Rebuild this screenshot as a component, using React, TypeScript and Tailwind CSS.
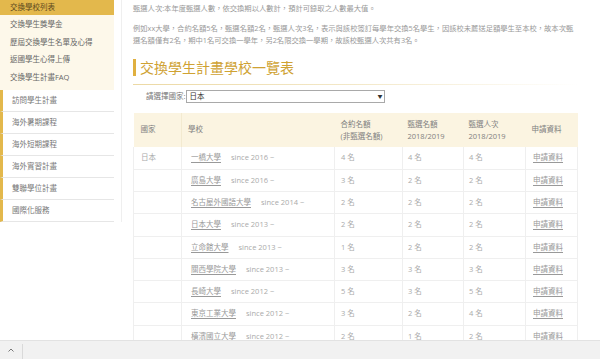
import React from 'react'

const topLinks = ['交換學生獎學金', '歷屆交換學生名單及心得', '返國學生心得上傳', '交換學生計畫FAQ']
const boxLinks = ['訪問學生計畫', '海外暑期課程', '海外短期課程', '海外實習計畫', '雙聯學位計畫', '國際化服務']

const rows = [
  { name: '一橋大學', since: 'since 2016 ~', a: '4 名', b: '4 名', c: '4 名' },
  { name: '廣島大學', since: 'since 2016 ~', a: '3 名', b: '2 名', c: '2 名' },
  { name: '名古屋外國語大學', since: 'since 2014 ~', a: '2 名', b: '2 名', c: '2 名' },
  { name: '日本大學', since: 'since 2013 ~', a: '2 名', b: '2 名', c: '2 名' },
  { name: '立命館大學', since: 'since 2013 ~', a: '1 名', b: '2 名', c: '2 名' },
  { name: '關西學院大學', since: 'since 2013 ~', a: '3 名', b: '3 名', c: '3 名' },
  { name: '長崎大學', since: 'since 2012 ~', a: '5 名', b: '3 名', c: '5 名' },
  { name: '東京工業大學', since: 'since 2012 ~', a: '3 名', b: '2 名', c: '4 名' },
  { name: '橫濱國立大學', since: 'since 2012 ~', a: '2 名', b: '1 名', c: '2 名' },
]

export default function App() {
  return (
    <div
      className="h-[359px] overflow-hidden bg-white text-[7.5px] text-[#888]"
      style={{ fontFamily: '"Open Sans", "Noto Sans CJK TC", sans-serif' }}
    >
      <div className="flex">
        {/* Sidebar */}
        <aside className="w-[122px] shrink-0 self-start border-r border-[#efefef] pr-[7px]">
          <div className="flex h-[15px] items-center bg-[#e3b84c] pl-[10px] text-[7.5px] text-[#5e4a1e]">
            交換學校列表
          </div>
          <div className="bg-[#fdf8ea] pt-px pb-[4px]">
            {topLinks.map((t) => (
              <div key={t} className="flex h-[17.5px] items-center pl-[10px] text-[#666]">
                {t}
              </div>
            ))}
          </div>
          <div>
            {boxLinks.map((t) => (
              <div
                key={t}
                className="flex h-[22px] items-center border-b border-l-[3px] border-b-[#e6e6e6] border-l-[#e3b84c] pl-[9px] text-[#777]"
              >
                {t}
              </div>
            ))}
          </div>
        </aside>

        {/* Content */}
        <main className="w-[446px] pl-[11px] box-content">
          <p className="mt-[2px] text-[7.3px] leading-[12px] text-[#999]">
            甄選人次:本年度甄選人數，依交換期以人數計，預計可錄取之人數最大值。
          </p>
          <p className="mt-[8px] text-[7.3px] leading-[12px] text-[#999]">
            例如xx大學，合約名額5名，甄選名額2名，甄選人次3名，表示與該校簽訂每學年交換5名學生，因該校未薦送足額學生至本校，故本次甄選名額僅有2名，期中1名可交換一學年，另2名限交換一學期，故該校甄選人次共有3名。
          </p>

          <div className="mt-[12px]">
            <div className="flex items-center">
              <span className="h-[17px] w-[3px] bg-[#e0b040]" />
              <h2 className="ml-[4px] text-[14px] leading-[19px] text-[#cfa233]">交換學生計畫學校一覽表</h2>
            </div>
            <div className="mt-[7px] h-px w-[444px] bg-gradient-to-r from-[#ecd9a4] via-[#f3e8c8] to-transparent" />
          </div>

          <div className="mt-[5px] flex items-center pl-[13px]">
            <span className="text-[#777]">請選擇國家:</span>
            <div className="ml-px flex h-[13px] w-[199px] items-center justify-between border border-[#a9a9a9] px-[2px] text-[#333]">
              <span>日本</span>
              <span className="text-[5px]">▼</span>
            </div>
          </div>

          <table className="mt-[10px] w-[444px] table-fixed border-collapse">
            <colgroup>
              <col className="w-[48px]" />
              <col className="w-[153px]" />
              <col className="w-[68px]" />
              <col className="w-[61px]" />
              <col className="w-[62px]" />
              <col className="w-[52px]" />
            </colgroup>
            <thead>
              <tr className="h-[34px] bg-[#fbf4e1] text-left text-[#808080]">
                <th className="pl-[7px] font-normal">國家</th>
                <th className="border-l border-[#f3ead0] pl-[6px] font-normal">學校</th>
                <th className="pl-[6px] font-normal leading-[12px]">
                  合約名額
                  <br />
                  (非甄選名額)
                </th>
                <th className="pl-[5px] font-normal leading-[12px]">
                  甄選名額
                  <br />
                  2018/2019
                </th>
                <th className="pl-[5px] font-normal leading-[12px]">
                  甄選人次
                  <br />
                  2018/2019
                </th>
                <th className="pl-[6px] font-normal">申請資料</th>
              </tr>
            </thead>
            <tbody className="text-[#aaa]">
              {rows.map((r, i) => (
                <tr key={r.name} className="h-[22.25px] border-b border-[#efefef]">
                  <td className="border-l border-[#efefef] pl-[7px]">{i === 0 ? '日本' : ''}</td>
                  <td className="border-l border-[#efefef] pl-[9px]">
                    <span className="text-[#999] underline underline-offset-2">{r.name}</span>
                    <span className="ml-[10px]">{r.since}</span>
                  </td>
                  <td className="border-l border-[#efefef] pl-[6px]">{r.a}</td>
                  <td className="border-l border-[#efefef] pl-[5px]">{r.b}</td>
                  <td className="border-l border-[#efefef] pl-[5px]">{r.c}</td>
                  <td className="border-x border-[#efefef] pl-[7px]">
                    <span className="text-[#999] underline underline-offset-2">申請資料</span>
                  </td>
                </tr>
              ))}
            </tbody>
          </table>
        </main>
      </div>

      {/* bottom bar */}
      <div className="fixed bottom-0 left-0 flex h-[19px] w-full items-center border-t border-[#e2e2e2] bg-[#f1f1f1]">
        <div className="flex w-[22px] justify-center">
          <svg width="6" height="4" viewBox="0 0 6 4" fill="none" stroke="#777" strokeWidth="1">
            <path d="M0.5 3.5 L3 1 L5.5 3.5" />
          </svg>
        </div>
        <div className="h-[15px] w-px self-end bg-[#d9d9d9]" />
      </div>
    </div>
  )
}
